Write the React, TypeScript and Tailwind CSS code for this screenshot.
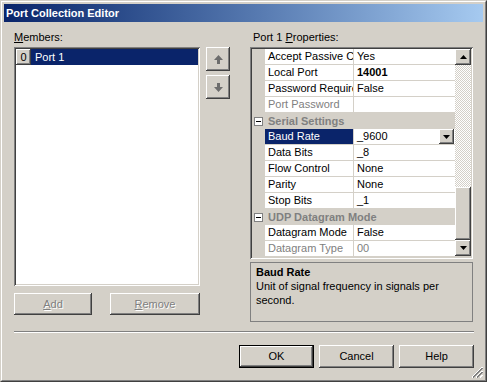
import React from 'react';

const raised =
  'shadow-[inset_-1px_-1px_#404040,inset_1px_1px_#ffffff,inset_-2px_-2px_#808080,inset_2px_2px_#d4d0c8]';
const sunken =
  'shadow-[inset_1px_1px_#808080,inset_-1px_-1px_#ffffff,inset_2px_2px_#404040,inset_-2px_-2px_#d4d0c8]';

type Row =
  | { kind: 'cat'; name: string }
  | { kind: 'prop'; name: string; value: string; disabled?: boolean; bold?: boolean; selected?: boolean };

const ROWS: Row[] = [
  { kind: 'prop', name: 'Accept Passive C', value: 'Yes' },
  { kind: 'prop', name: 'Local Port', value: '14001', bold: true },
  { kind: 'prop', name: 'Password Require', value: 'False' },
  { kind: 'prop', name: 'Port Password', value: '', disabled: true },
  { kind: 'cat', name: 'Serial Settings' },
  { kind: 'prop', name: 'Baud Rate', value: '_9600', selected: true },
  { kind: 'prop', name: 'Data Bits', value: '_8' },
  { kind: 'prop', name: 'Flow Control', value: 'None' },
  { kind: 'prop', name: 'Parity', value: 'None' },
  { kind: 'prop', name: 'Stop Bits', value: '_1' },
  { kind: 'cat', name: 'UDP Datagram Mode' },
  { kind: 'prop', name: 'Datagram Mode', value: 'False' },
  { kind: 'prop', name: 'Datagram Type', value: '00', disabled: true },
];

function Triangle({ down }: { down?: boolean }) {
  return (
    <svg width="7" height="4" viewBox="0 0 7 4">
      {down ? <path d="M0 0h7L3.5 4z" fill="#000" /> : <path d="M0 4h7L3.5 0z" fill="#000" />}
    </svg>
  );
}

function MoveArrow({ down }: { down?: boolean }) {
  return (
    <svg width="9" height="9" viewBox="0 0 9 9" className={down ? 'rotate-180' : ''}>
      <path d="M4.5 0L9 5H6v4H3V5H0z" fill="#6d6d6d" />
    </svg>
  );
}

function PropertyRow({ row }: { row: Row }) {
  if (row.kind === 'cat') {
    return (
      <div className="flex h-[16px] bg-[#d4d0c8]">
        <div className="w-[13px] flex items-center justify-center">
          <div className="w-[9px] h-[9px] border border-[#808080] bg-white flex items-center justify-center">
            <div className="w-[5px] h-px bg-black" />
          </div>
        </div>
        <div className="pl-[3px] leading-[16px] font-bold text-[#808080] whitespace-nowrap">{row.name}</div>
      </div>
    );
  }
  const tone = row.disabled ? 'text-[#808080]' : 'text-black';
  return (
    <div className="flex h-[16px]">
      <div className="w-[13px] bg-[#d4d0c8]" />
      <div
        className={`w-[89px] border-r border-b border-[#d4d0c8] overflow-hidden whitespace-nowrap leading-[15px] ${
          row.selected ? 'bg-[#0a246a] text-white pl-[3px]' : `bg-white pl-[3px] ${tone}`
        }`}
      >
        {row.name}
      </div>
      <div className={`flex-1 flex bg-white border-b border-[#d4d0c8] ${tone}`}>
        <div className={`flex-1 pl-[3px] leading-[15px] whitespace-nowrap ${row.bold ? 'font-bold' : ''}`}>
          {row.value}
        </div>
        {row.selected && (
          <div className={`w-[15px] h-[15px] mr-[1px] bg-[#d4d0c8] flex items-center justify-center ${raised}`}>
            <Triangle down />
          </div>
        )}
      </div>
    </div>
  );
}

export default function App() {
  return (
    <div className="w-[487px] h-[382px] bg-[#d4d0c8] border border-t-[#d4d0c8] border-l-[#d4d0c8] border-r-[#404040] border-b-[#404040] font-['Liberation_Sans',Arial,sans-serif] text-[11px] text-black select-none">
      <div className="h-full flex flex-col border border-t-white border-l-white border-r-[#808080] border-b-[#808080] p-[2px]">
        {/* Title bar */}
        <div className="h-[18px] shrink-0 pl-[2px] bg-linear-to-r from-[#0a246a] to-[#a6caf0] text-white font-bold leading-[18px]">
          Port Collection Editor
        </div>

        {/* Content */}
        <div className="flex-1 flex flex-col relative">
          <div className="flex pt-[9px] pl-[10px]">
            {/* Members */}
            <div className="w-[186px] flex flex-col">
              <div className="h-[16px] leading-[13px]">
                <span className="underline">M</span>embers:
              </div>
              <div className={`h-[239px] bg-white p-[2px] ${sunken}`}>
                <div className="flex h-[16px]">
                  <div className={`w-[15px] bg-[#d4d0c8] flex items-center justify-center leading-[16px] ${raised}`}>0</div>
                  <div className="flex-1 bg-[#0a246a] text-white pl-[4px] leading-[16px]">Port 1</div>
                </div>
              </div>
              <div className="flex mt-[7px] gap-[18px]">
                <button className={`w-[78px] h-[22px] bg-[#d4d0c8] text-[#808080] [text-shadow:1px_1px_0_#fff] ${raised}`}>
                  <span className="underline">A</span>dd
                </button>
                <button className={`w-[90px] h-[22px] bg-[#d4d0c8] text-[#808080] [text-shadow:1px_1px_0_#fff] ${raised}`}>
                  <span className="underline">R</span>emove
                </button>
              </div>
            </div>

            {/* Up / down */}
            <div className="ml-[6px] mt-[16px] flex flex-col gap-[4px]">
              <button className={`w-[24px] h-[24px] bg-[#d4d0c8] flex items-center justify-center ${raised}`}>
                <MoveArrow />
              </button>
              <button className={`w-[24px] h-[24px] bg-[#d4d0c8] flex items-center justify-center ${raised}`}>
                <MoveArrow down />
              </button>
            </div>

            {/* Properties */}
            <div className="ml-[20px] w-[223px] flex flex-col">
              <div className="h-[16px] leading-[13px] pl-[3px]">
                Port 1 <span className="underline">P</span>roperties:
              </div>
              <div className={`h-[212px] bg-[#d4d0c8] p-[2px] flex ${sunken}`}>
                <div className="flex-1 flex flex-col overflow-hidden">
                  {ROWS.map((r, i) => (
                    <PropertyRow key={i} row={r} />
                  ))}
                </div>
                {/* Scrollbar */}
                <div className="w-[16px] flex flex-col">
                  <div className={`h-[16px] bg-[#d4d0c8] flex items-center justify-center ${raised}`}>
                    <Triangle />
                  </div>
                  <div className="h-[122px] bg-[repeating-conic-gradient(#ffffff_0%_25%,#d4d0c8_0%_50%)] bg-size-[2px_2px]" />
                  <div className={`h-[53px] bg-[#d4d0c8] ${raised}`} />
                  <div className={`h-[16px] bg-[#d4d0c8] flex items-center justify-center ${raised}`}>
                    <Triangle down />
                  </div>
                </div>
              </div>
              <div className="mt-[3px] h-[60px] border border-[#808080] px-[5px] pt-[3px]">
                <div className="font-bold leading-[13px]">Baud Rate</div>
                <div className="leading-[14px]">
                  Unit of signal frequency in signals per
                  <br />
                  second.
                </div>
              </div>
            </div>
          </div>

          {/* Separator */}
          <div className="mt-[9px] ml-[10px] mr-[9px] h-[2px] border-t border-t-[#808080] border-b border-b-white" />

          {/* Dialog buttons */}
          <div className="flex justify-end gap-[5px] mt-[12px] pr-[9px]">
            <button className="w-[75px] h-[23px] border border-black bg-[#d4d0c8] shadow-[inset_-1px_-1px_#404040,inset_1px_1px_#ffffff,inset_-2px_-2px_#808080]">
              OK
            </button>
            <button className={`w-[75px] h-[23px] bg-[#d4d0c8] ${raised}`}>Cancel</button>
            <button className={`w-[75px] h-[23px] bg-[#d4d0c8] ${raised}`}>Help</button>
          </div>

          {/* Size grip */}
          <svg width="12" height="12" viewBox="0 0 12 12" className="absolute right-0 bottom-0">
            <path d="M11 1L1 11M12 1L1 12" stroke="#ffffff" />
            <path d="M11 2L2 11M12 2L2 12" stroke="#808080" />
            <path d="M11 5L5 11M12 5L5 12" stroke="#ffffff" />
            <path d="M11 6L6 11M12 6L6 12" stroke="#808080" />
            <path d="M11 9L9 11M12 9L9 12" stroke="#ffffff" />
          </svg>
        </div>
      </div>
    </div>
  );
}
